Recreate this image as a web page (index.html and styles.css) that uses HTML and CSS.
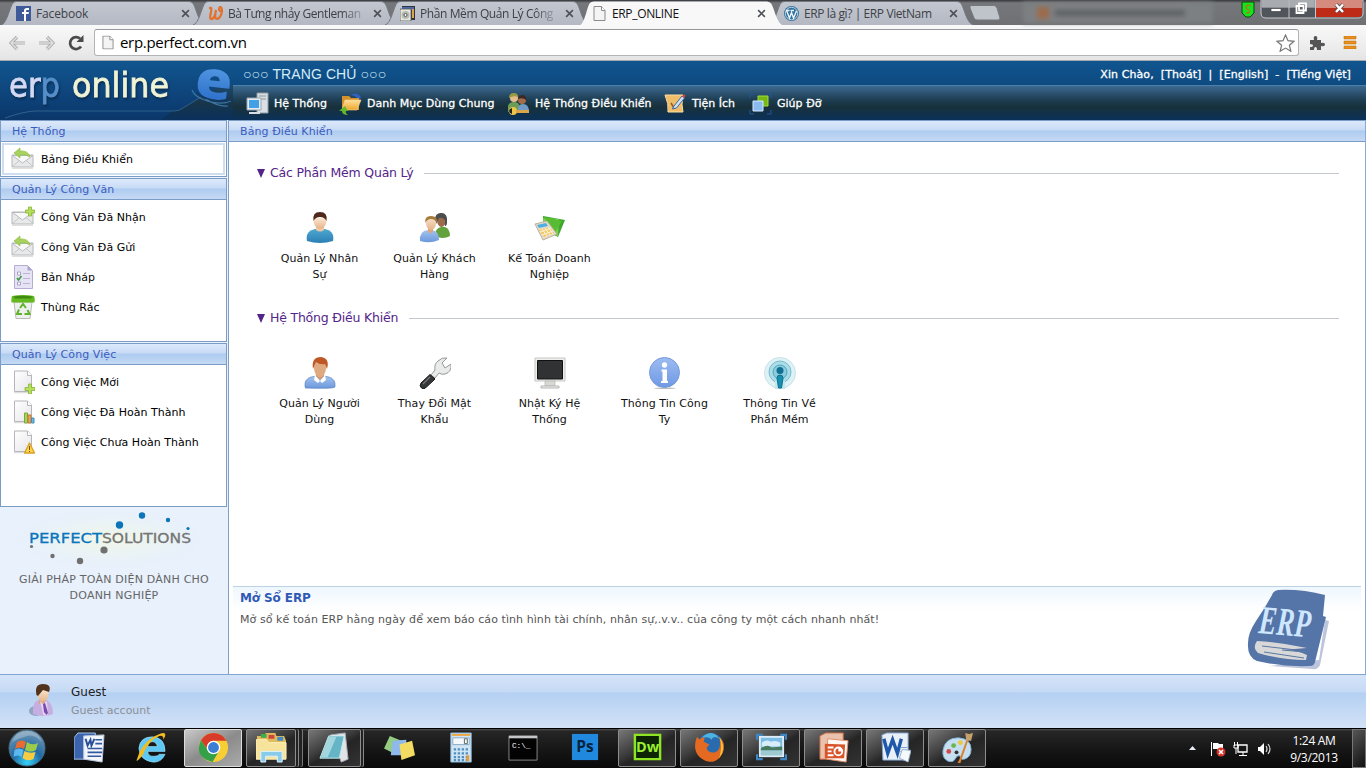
FILE: index.html
```html
<!DOCTYPE html>
<html lang="vi">
<head>
<meta charset="utf-8">
<title>ERP_ONLINE</title>
<link rel="stylesheet" href="styles.css">
</head>
<body>
<svg class="defs" width="0" height="0" aria-hidden="true">
  <defs>
    <linearGradient id="tabG" x2="0" y2="1"><stop offset="0" stop-color="#c3c7d0"/><stop offset="1" stop-color="#b3b8c2"/></linearGradient>
    <linearGradient id="eG" x2="0" y2="1"><stop offset="0" stop-color="#6db4f2"/><stop offset="1" stop-color="#1d5fc0"/></linearGradient>
    <linearGradient id="navG" x2="0" y2="1"><stop offset="0" stop-color="#1b4a70"/><stop offset=".5" stop-color="#18354a"/><stop offset="1" stop-color="#0a315c"/></linearGradient>
    <linearGradient id="blueG" x2="0" y2="1"><stop offset="0" stop-color="#4fa8d0"/><stop offset="1" stop-color="#2b7fb4"/></linearGradient>
    <linearGradient id="shirtG" x2="0" y2="1"><stop offset="0" stop-color="#a4c4f0"/><stop offset="1" stop-color="#6b98dc"/></linearGradient>
    <linearGradient id="faceG" x2="0" y2="1"><stop offset="0" stop-color="#fbe6d0"/><stop offset="1" stop-color="#e4b48a"/></linearGradient>
    <linearGradient id="pageG" x2="1" y2="1"><stop offset="0" stop-color="#fff"/><stop offset="1" stop-color="#e6e6ea"/></linearGradient>
    <linearGradient id="infoG" x2="0" y2="1"><stop offset="0" stop-color="#9dbcf2"/><stop offset="1" stop-color="#6f99e4"/></linearGradient>
    <linearGradient id="folderG" x2="0" y2="1"><stop offset="0" stop-color="#ffe09a"/><stop offset="1" stop-color="#eea62c"/></linearGradient>
    <radialGradient id="orbG" cx=".5" cy=".9" r=".9"><stop offset="0" stop-color="#35d4f8"/><stop offset=".45" stop-color="#1f6aa4"/><stop offset="1" stop-color="#7c9cb4"/></radialGradient>
    <radialGradient id="glowG"><stop offset="0" stop-color="#f4f8e4" stop-opacity=".9"/><stop offset="1" stop-color="#e8f3f0" stop-opacity="0"/></radialGradient>
    <symbol id="envelope" viewBox="0 0 24 24">
      <path d="M1 8h21v12H1z" fill="#e9e9ea" stroke="#b5b7ba"/><path d="M1.500 19.500 9 13M22 19.500 14.500 13" stroke="#c4c6c8" fill="none"/><path d="M1.500 8.500 11.500 16 22 8.500z" fill="#f8f8f8" stroke="#b9bbbe"/><path d="M1 21.500h21" stroke="#ccc" stroke-opacity=".6"/>
    </symbol>
    <symbol id="sheet" viewBox="0 0 24 24">
      <path d="M3.500 1h13l4 4v16.500h-17z" fill="url(#pageG)" stroke="#b5b5ba"/><path d="M16.500 1v4.500h4.500" fill="#fff" stroke="#b5b5ba"/><path d="M3 22.700h17" stroke="#999" stroke-opacity=".4"/>
    </symbol>
    <symbol id="blank" viewBox="0 0 13 15"><path d="M1 .5h7.500L12 4.500v10H1z" fill="#f4f4f4" stroke="#8a8a8a"/><path d="M8.500 .5v4H12" fill="#fff" stroke="#8a8a8a"/></symbol>
    <symbol id="tab" viewBox="0 0 206 25"><path d="M0 25C6 24 9 6 12 3Q13 1.500 16 1.500H188Q191 1.500 192.500 4C196 11 198 24 205 25" fill="url(#tabG)" stroke="#74787f"/></symbol>
  </defs>
</svg>

<div class="tabs">
  <div class="tab"><svg class="tab-bg"><use href="#tab"/></svg>
    <svg class="fav" viewBox="0 0 15 15"><path d="M0 0h15v15H0z" fill="#3f5a99"/><path d="M8 15V8H6V6h2V4.500Q8 2 11 2h2v2h-2q-1 0-1 1v1h3l-.5 2H10v7z" fill="#fff"/></svg>
    <span class="tab-label t1">Facebook</span><svg class="close" viewBox="0 0 8 8"><path d="m1 1 6 6M7 1 1 7"/></svg></div>
  <div class="tab"><svg class="tab-bg"><use href="#tab"/></svg>
    <svg class="fav" viewBox="0 0 15 15"><path d="M2 2q2-1 1 4-2 8 1 7 3-1 4-9-2 9 1 9 4-1 5-8 0-4-2-4-2 2 0 4" fill="none" stroke="#e3702c" stroke-width="2.200" stroke-linecap="round"/></svg>
    <span class="tab-label t2">Bà Tưng nhảy Gentleman</span><svg class="close" viewBox="0 0 8 8"><path d="m1 1 6 6M7 1 1 7"/></svg></div>
  <div class="tab"><svg class="tab-bg"><use href="#tab"/></svg>
    <svg class="fav" viewBox="0 0 15 15"><path d="M2 0h13v14H2z" fill="#31343c"/><path d="M2 1h12v3H2z" fill="#496ca8"/><path d="M12 3h2v9h-2z" fill="#dca34b"/><path d="M0 3h11v12H0z" fill="#e8e8df" stroke="#555" stroke-width=".8"/><circle cx="5.500" cy="9" r="4" fill="#b4bcb4"/><circle cx="5.500" cy="9" r="1.500" fill="#fff" stroke="#555"/></svg>
    <span class="tab-label t3">Phần Mềm Quản Lý Công</span><svg class="close" viewBox="0 0 8 8"><path d="m1 1 6 6M7 1 1 7"/></svg></div>
  <div class="tab active"><svg class="tab-bg" viewBox="0 0 206 26"><path d="M0 26C6 24 8 6 11 3Q12 1.500 15 1.500H188Q191 1.500 192.500 4C196 11 198 24 205 26" fill="#f8f8f9"/></svg>
    <svg class="fav" viewBox="0 0 13 15"><use href="#blank"/></svg>
    <span class="tab-label t4">ERP_ONLINE</span><svg class="close" viewBox="0 0 8 8"><path d="m1 1 6 6M7 1 1 7"/></svg></div>
  <div class="tab"><svg class="tab-bg"><use href="#tab"/></svg>
    <svg class="fav" viewBox="0 0 15 15"><circle cx="7.500" cy="7.500" r="7.500" fill="#2e719d"/><circle cx="7.500" cy="7.500" r="6.200" fill="none" stroke="#d7e2ea" stroke-width=".8"/><path d="M2.500 4.500 5.500 12 7.500 6.500 9.500 12 12.500 5M2 4.500h3.500M6.500 4.500H10" fill="none" stroke="#eef4f8" stroke-width="1.400"/></svg>
    <span class="tab-label t5">ERP là gì? | ERP VietNam</span><svg class="close" viewBox="0 0 8 8"><path d="m1 1 6 6M7 1 1 7"/></svg></div>
  <svg class="newtab" viewBox="0 0 32 16"><path d="M2 .5h23q2 0 3 2.500l3 10q0 2-2 2H8q-2 0-3-2L1 3Q.500 .5 2 .5" fill="#bfc3ca" stroke="#74787f"/></svg>
  <div class="ghost"><i></i><b></b></div>
  <div class="win-area">
    <svg class="shield" viewBox="0 0 14 17"><path d="M1 1h12v11l-4 4H5l-4-4z" fill="#19e11d" stroke="#064b08"/><path d="M10 5q-4-2-5 1 0 2 3 3 2 3-3 3" fill="none" stroke="#a4801a" stroke-width="1.300"/></svg>
    <div class="win">
      <svg viewBox="0 0 104 19"><path d="M1 0h102v13q0 5-5 5H6q-5 0-5-5z" fill="#50545b" stroke="#c5c9cd"/><path d="M1.500 0h54v8h-54z" fill="#8b9097"/><path d="M1.500 0h27v7h-27zM29.500 0h25v7h-25z" fill="#a8acb1"/><path d="M56 0h46v13q0 4-4 4H56z" fill="#be2c18"/><path d="M56 0h46v8H56z" fill="#d48a7c"/><path d="M29 0v18M55.500 0v18" stroke="#c5c9cd"/><path d="M11 8.500h10v3H11z" fill="#fff" stroke="#444" stroke-width=".7"/><path d="M39 3.500h7v7h-7zM36.500 6h7v7h-7z" fill="#5d6167" stroke="#fff" stroke-width="1.800"/><path d="m76 4.500 7 7.500M83 4.500 76 12" stroke="#544" stroke-width="4"/><path d="m76 4.500 7 7.500M83 4.500 76 12" stroke="#fff" stroke-width="2.500"/></svg>
    </div>
  </div>
</div>

<div class="toolbar">
  <svg class="arrows" viewBox="0 0 46 16"><path d="M16 8H2M8 2 2 8l6 6M30 8h14M38 2l6 6-6 6" fill="none" stroke="#aaa" stroke-width="3.200"/><path d="M16 8H2M8 2 2 8l6 6M30 8h14M38 2l6 6-6 6" fill="none" stroke="#dedede" stroke-width="1.500"/></svg>
  <svg class="reload" viewBox="0 0 16 16"><path d="M13 11.500A6 6 0 1 1 12 3.500" fill="none" stroke="#4a4a4a" stroke-width="2.700"/><path d="M15.500 0v7H8.500z" fill="#4a4a4a"/></svg>
  <div class="omnibox"><svg class="page-ico" viewBox="0 0 13 15"><use href="#blank"/></svg><span class="url">erp.perfect.com.vn</span>
    <svg class="star" viewBox="0 0 19 18"><path d="m9.500 1 2.500 5.700 6 .6-4.600 4 1.500 6-5.400-3.200-5.400 3.200 1.500-6L1 7.300l6-.6z" fill="#fff" stroke="#777" stroke-width="1.200"/></svg></div>
  <svg class="puzzle" viewBox="0 0 16 16"><path d="M1 5h4q-1-4 1.500-4T8 5h4v3q4-1 4 1.500T12 11v4H8q0-3-1.500-3T5 15H1v-3q3 0 3-1.500T1 9z" fill="#555"/></svg>
  <svg class="menu" viewBox="0 0 14 13"><path d="M1 0h12v3H1zM1 5h12v3H1zM1 10h12v3H1z" fill="#e98f1c" stroke="#bd6b0b" stroke-width=".5"/></svg>
</div>

<header class="head">
  <div class="brand">
    <svg viewBox="0 0 233 59">
      <path d="M233 24C214 25 206 32 197 38l-16 10q-4 2-8 2l-13 9h73z" fill="url(#navG)"/>
      <path d="M5 57q20-7 31-7h138q5 0 9-3l18-11" fill="none" stroke="#3d719b" opacity=".7"/>
      <text x="9" y="36" class="logo-a" textLength="51" lengthAdjust="spacingAndGlyphs">er<tspan class="logo-p">p</tspan></text>
      <text x="72" y="36" class="logo-b" textLength="97" lengthAdjust="spacingAndGlyphs">online</text>
      <path d="M192 29c3 9 26 17 39 11M206 38q12 8 22 7" fill="none" stroke="#3b75a5" stroke-width="1.200"/>
      <text x="195" y="38" class="logo-e" textLength="37" lengthAdjust="spacingAndGlyphs" transform="rotate(6 213 24)">e</text>
      <path d="M197 32c9 7 22 10 34 7" fill="none" stroke="#123a62" stroke-width="1.500"/>
    </svg>
  </div>
  <div class="head-right">
    <div class="head-top"><span class="home">○○○ TRANG CHỦ ○○○</span><span class="user"><span>Xin Chào,&nbsp; [Thoát]</span><span>|</span><span>[English]</span><span>-</span><span>[Tiếng Việt]</span></span></div>
    <nav class="nav">
      <a class="n1"><svg viewBox="0 0 24 24"><path d="M11 1h11v20H11z" fill="#d9dfe4" stroke="#8f9ba4"/><path d="M13 4h7M13 7h7" stroke="#899"/><path d="M1 6h14v12H1z" fill="#e6ecf2" stroke="#9aa6b0"/><path d="M3 8h10v8H3z" fill="#42a0e6"/><path d="M3 20h11v2H3z" fill="#d7dde2"/></svg><span>Hệ Thống</span></a>
      <a class="n2"><svg viewBox="0 0 24 24"><path d="M11 3q7-4 11 2l-2 3q-4-5-9-5" fill="#2d62c0"/><path d="M3 4h7l2 2h8v12H3z" fill="#d5912a"/><path d="M6 8h16l-4 10H3z" fill="url(#folderG)" stroke="#f6d492" stroke-width=".6"/><path d="m6 14-6 5h3q0 4 6 4-3-2-2-4h2z" fill="#62b92c"/></svg><span>Danh Mục Dùng Chung</span></a>
      <a class="n3"><svg viewBox="0 0 24 24"><path d="M1 20V14q1-4 6-4t6 5v5z" fill="#6b9d56"/><circle cx="7" cy="6" r="4" fill="#e5bd8d"/><path d="M2 6q0-5 5-5 4 0 4 4-4-2-9 1" fill="#9a9a42"/><path d="M11 20v-4q1-4 5-4 6 0 6 8z" fill="#719cc5"/><circle cx="15" cy="8" r="4" fill="#a66d4a"/><path d="M11 7q0-4 5-4 4 1 3 5-3-3-8-1" fill="#3b2a26"/><circle cx="6" cy="19" r="4" fill="#efc64a"/><path d="M5 16v6q-3-1-3-3t3-3" fill="#222"/><path d="M9 18h13v3H9z" fill="#dca64b"/></svg><span>Hệ Thống Điều Khiển</span></a>
      <a class="n4"><svg viewBox="0 0 24 24"><path d="M1 3h18q-2 10 0 17H4Q5 12 1 3" fill="#f0bd68" stroke="#fce0a6"/><path d="m7 11 3 5 7-8" fill="none" stroke="#8f5d25" stroke-width="1.500"/><path d="m10 14 8-10 2.500 2-8 10-4 1z" fill="#d6e0ec" stroke="#336aab"/><path d="m18 4 2-1.500 1.500 1L20 6z" fill="#e3453a"/></svg><span>Tiện Ích</span></a>
      <a class="n5"><svg viewBox="0 0 24 24"><path d="M1 6V2h4M18 2h4v4M1 18v4h4M18 22h4v-4" fill="none" stroke="#235897"/><path d="M9 4h10v10H9z" fill="#77b818" stroke="#a2dc38"/><path d="M4 9h10v10H4z" fill="#89bbf2" stroke="#d8eaff"/></svg><span>Giúp Đỡ</span></a>
    </nav>
  </div>
</header>

<main class="main">
  <aside class="side">
    <section class="panel p1"><h2>Hệ Thống</h2>
      <ul class="sel"><li><svg viewBox="0 0 24 24"><use href="#envelope"/><path d="m3 6 6-5v3q8-1 10 6-4-3-10-2v3z" fill="#a7d25b" stroke="#86b83d" stroke-width=".6"/></svg><span>Bảng Điều Khiển</span></li></ul></section>
    <section class="panel p2"><h2>Quản Lý Công Văn</h2>
      <ul><li><svg viewBox="0 0 24 24"><use href="#envelope" y="-1"/><path d="M17.500 2h3v3h3v3h-3v3h-3V8h-3V5h3z" fill="#b5de5c" stroke="#86b536" stroke-width=".8"/></svg><span>Công Văn Đã Nhận</span></li>
      <li><svg viewBox="0 0 24 24"><use href="#envelope"/><path d="m3 6 6-5v3q8-1 10 6-4-3-10-2v3z" fill="#a7d25b" stroke="#86b83d" stroke-width=".6"/></svg><span>Công Văn Đã Gửi</span></li>
      <li><svg viewBox="0 0 24 24"><path d="M3.500 .5h13l5 5v18h-18z" fill="#e6e3f4" stroke="#b6aed2"/><path d="M16.500 .5v5h5" fill="#aaa3cc"/><path d="M6.500 7h3v3h-3zM6.500 17h3v3h-3z" fill="#fff" stroke="#a9a2c5"/><path d="M12 8.500h7M12 13.500h7M12 18.500h7" stroke="#bcb5d6"/><path d="m6 13 1.500 2 3-4" stroke="#3b9a3e" fill="none" stroke-width="1.600"/></svg><span>Bản Nháp</span></li>
      <li><svg viewBox="0 0 24 24"><path d="M3 7h18l-2 16.500H5z" fill="#eeefef" stroke="#b8bcb8"/><path d="M1 1q11-2 22 0 1 2 .500 6.500H.500Q0 4 1 1" fill="#65b91e"/><path d="M2.500 1.500q9-1.500 19 0L20 3.500H4z" fill="#3f8a12"/><path d="m9 13 3-4 3 4M16.500 15l2 4h-5M11 19H6l2-4.500" fill="none" stroke="#61b329" stroke-width="2"/></svg><span>Thùng Rác</span></li></ul></section>
    <section class="panel p3"><h2>Quản Lý Công Việc</h2>
      <ul><li><svg viewBox="0 0 24 24"><use href="#sheet"/><path d="M17.500 14h3v3.500H24v3h-3.500V24h-3v-3.500H14v-3h3.500z" fill="#b5de5c" stroke="#86b536" stroke-width=".8"/></svg><span>Công Việc Mới</span></li>
      <li><svg viewBox="0 0 24 24"><use href="#sheet"/><path d="M13.500 13h3v10h-3z" fill="#a8d35d" stroke="#78a93a"/><path d="M17 15h3v8h-3z" fill="#eca35d" stroke="#c47730"/><path d="M20.500 18H23v5h-2.500z" fill="#68bde6" stroke="#398fb8"/></svg><span>Công Việc Đã Hoàn Thành</span></li>
      <li><svg viewBox="0 0 24 24"><use href="#sheet"/><path d="m18.500 13 5 10H13.500z" fill="#ffd44a" stroke="#daa22b" stroke-linejoin="round" stroke-width="1.300"/><path d="M18.500 16v4M18.500 21v1" stroke="#73571e"/></svg><span>Công Việc Chưa Hoàn Thành</span></li></ul></section>
    <div class="company">
      <svg viewBox="0 0 227 64"><ellipse cx="110" cy="32" rx="95" ry="29" fill="url(#glowG)"/>
        <g fill="#0b75b8"><circle cx="119.500" cy="18" r="3.700"/><circle cx="142" cy="8.500" r="3.200"/><circle cx="168" cy="13" r="2.200"/><circle cx="188" cy="21.500" r="1.600"/></g>
        <g fill="#707070"><circle cx="104" cy="43" r="3.600"/><circle cx="80" cy="54" r="3.200"/><circle cx="52.500" cy="49" r="2.200"/><circle cx="31.500" cy="39.500" r="1.600"/></g>
        <text x="29" y="36" class="pf" textLength="73" lengthAdjust="spacingAndGlyphs">PERFECT</text><text x="102" y="36" class="sl" textLength="89" lengthAdjust="spacingAndGlyphs">SOLUTIONS</text></svg>
      <p>GIẢI PHÁP TOÀN DIỆN DÀNH CHO<br>DOANH NGHIỆP</p>
    </div>
  </aside>

  <section class="content">
    <h1 class="title">Bảng Điều Khiển</h1>
    <div class="board">
      <section class="group"><h3><i></i><span class="g1">Các Phần Mềm Quản Lý</span></h3>
        <div class="cards">
          <div class="card"><svg viewBox="0 0 32 32"><path d="M3 29q-2-10 8-12h10q10 2 8 12-13 4-26 0" fill="url(#blueG)"/><path d="M12 14h8v4q-4 3-8 0z" fill="#eec6a0"/><path d="M9.500 6h13q0 11-6.500 11T9.500 6" fill="url(#faceG)"/><path d="M9.500 9Q8 0 16 0t6.500 9q-2-4-6.500-4T9.500 9" fill="#50281a"/></svg><span>Quản Lý Nhân<br>Sự</span></div>
          <div class="card"><svg viewBox="0 0 32 32"><path d="M16 24q0-8 6-9h4q5 2 5 9-7 4-15 0" fill="#63a13c"/><ellipse cx="22.500" cy="8" rx="4.500" ry="7" fill="#9b6b4b"/><path d="M16 8q0-7 6-7 7 0 6 9 0 4-2 4V8q-3-3-6-2l-3 6z" fill="#4b4d4e"/><path d="M1 29q-1-10 8-11h4q7 1 7 10-9 4-19 1" fill="url(#shirtG)"/><path d="M9 16h5v4q-2 2-5 0z" fill="#dda77b"/><ellipse cx="12" cy="11" rx="5" ry="7" fill="url(#faceG)"/><path d="M6.500 11Q5 4 12 4t6 7q-2-4-6-4-4 0-5.500 4" fill="#a47b39"/></svg><span>Quản Lý Khách<br>Hàng</span></div>
          <div class="card"><svg viewBox="0 0 32 32"><path d="m9 4 22 4-7 17-15-8z" fill="#3da82c"/><path d="m9 6 16 1-1 17-14-4z" fill="#79cc4e"/><path d="m10 5 18 4-8 13z" fill="#57bc32"/><path d="m1 12 12-3 10 13-14 6z" fill="#e4ddcb" stroke="#bbb19b"/><path d="m3 13 9-2 2 3-9 2z" fill="#4fafe0"/><path d="m5 18 10-3 5 6-10 4z" fill="#f5c95d"/><path d="m8 17 5 7M11 16l5 7M14 15l5 7M6 20l11-4M8 23l11-4" stroke="#f9f4e6"/></svg><span>Kế Toán Doanh<br>Nghiệp</span></div>
        </div></section>
      <section class="group"><h3><i></i><span class="g2">Hệ Thống Điều Khiển</span></h3>
        <div class="cards">
          <div class="card"><svg viewBox="0 0 32 32"><path d="M1 30q-1-8 6-10l6-1h6l6 1q7 2 6 10-1 2-30 1" fill="url(#shirtG)" stroke="#5379b8" stroke-width=".6"/><path d="m11 18 5 6 5-6 1 5-4 3-2-2-2 2-4-3z" fill="#fff"/><path d="M12 15h8v4l-4 4-4-4z" fill="#d59c72"/><ellipse cx="16" cy="11" rx="6" ry="9" fill="#e0aa80"/><path d="M9 12Q7 0 17 0q9 1 6 12l-2-5q-5 1-9-2-1 2-3 7" fill="#bd5725"/></svg><span>Quản Lý Người<br>Dùng</span></div>
          <div class="card"><svg viewBox="0 0 32 32"><path d="m12 18 4-5q-1-6 3-9 4-4 9-3l-5 5 3 5 6-4q1 8-6 10-3 1-6-1l-4 5z" fill="#e9eaea" stroke="#96999b"/><path d="M11 17.500 16 22 7.500 30Q5 33 2.500 31T2 26z" fill="#343738" stroke="#171919"/><path d="m4 27 7-7" stroke="#777" stroke-width="1.200"/></svg><span>Thay Đổi Mật<br>Khẩu</span></div>
          <div class="card"><svg viewBox="0 0 32 32"><path d="M1 1h30v23H1z" fill="#eeeeec" stroke="#c5c5c2"/><path d="M3.500 3.500h25v18.500h-25z" fill="#303234" stroke="#111"/><path d="M11 24h10v5H11z" fill="#d8d8d5" stroke="#b6b6b2" stroke-width=".7"/><path d="M7 29h18v2H7z" fill="#eee" stroke="#b6b6b2"/></svg><span>Nhật Ký Hệ<br>Thống</span></div>
          <div class="card"><svg viewBox="0 0 32 32"><ellipse cx="16" cy="31.200" rx="11" ry=".8" fill="#bbb"/><circle cx="15.500" cy="15.500" r="15" fill="url(#infoG)" stroke="#7699db"/><circle cx="15.500" cy="8" r="2.700" fill="#fff"/><path d="M12.500 12.500h5.500V24h1v2h-7v-2h1.500v-9.500h-1z" fill="#fff"/></svg><span>Thông Tin Công<br>Ty</span></div>
          <div class="card"><svg viewBox="0 0 32 32"><circle cx="16" cy="16" r="15.500" fill="#d7eef3" stroke="#b5dce6" opacity=".8"/><circle cx="16" cy="15" r="11" fill="#acdce8" stroke="#78bdd0"/><circle cx="16" cy="15" r="7" fill="#8bcddc" stroke="#4fa6be"/><path d="M11 24h10v8H11z" fill="#c6e5ec"/><circle cx="16" cy="13.500" r="3.500" fill="#126f93"/><path d="M13 21q0-3 3-3t3 3l-1.500 10h-3z" fill="#168fae" stroke="#08718e"/></svg><span>Thông Tin Về<br>Phần Mềm</span></div>
        </div></section>
    </div>
    <div class="news">
      <div><h4>Mở Sổ ERP</h4><p>Mở sổ kế toán ERP hằng ngày để xem báo cáo tình hình tài chính, nhân sự,.v.v.. của công ty một cách nhanh nhất!</p></div>
      <svg class="book" viewBox="0 0 84 84"><path d="m78 30 4 1-9 44q-2 5-8 4l-43-3 50-6z" fill="#bcc5dc"/><path d="M25 5q1-4 6-5 24-1 47 5l-2 21 3 1-11 45q-1 4-5 4-28 1-53-5Q0 67 1 53q0-10 8-22 9-13 16-26" fill="#5574a7"/><path d="M10 51q23 1 50 7l-25 2q15 0 25 5l-1 5q-24 0-48-7-6-5-1-12" fill="#d8d8d8"/><path d="m15 56 43 5M35 60l23 2M17 62l40 6" stroke="#5c77a2"/><text x="11" y="43" class="erp" textLength="52" lengthAdjust="spacingAndGlyphs" transform="rotate(5 11 43)">ERP</text></svg>
    </div>
  </section>
</main>

<footer class="foot">
  <svg viewBox="0 0 32 34"><ellipse cx="9" cy="27" rx="7" ry="5" fill="#778fb0" opacity=".7"/><path d="M6 30Q5 17 12 16h8q6 4 6 14-9 4-20 0" fill="#c7aee0"/><path d="M12 14h6v6h-6z" fill="#dba47d"/><path d="m13 17 3 3 4-3 1 14q-5 2-5-1z" fill="#e4d3f2"/><path d="m16 20 2-1 3 10-1.500 2-2.500-3z" fill="#7a4bac"/><path d="M10 5h11q2 12-5.500 13-6-2-5.500-13" fill="url(#faceG)"/><path d="M9.500 11Q7 0 16 0t6 8l-6-2-5 6z" fill="#51331e"/></svg>
  <div><b>Guest</b><span>Guest account</span></div>
</footer>

<div class="taskbar">
  <div class="slots">
    <div class="slot"><svg class="orb" viewBox="0 0 38 38"><circle cx="19" cy="19" r="18" fill="url(#orbG)" stroke="#456b82"/><path d="M9 13q5-3 9 0l-2 7q-4-3-9 0z" fill="#e86b32"/><path d="M19 13q5 4 11 1l-2 7q-5 3-11 0z" fill="#9ccb4a"/><path d="M6.500 21q5-3 9 0l-2 7q-4-3-8 0z" fill="#5bb9ef"/><path d="M16.500 22q5 3 11 1l-2 7q-6 3-11-1z" fill="#f8cc42"/><path d="M4 13Q8 2 19 2t15 11q-8-8-15-6T4 13" fill="#fff" opacity=".25"/></svg></div>
    <div class="slot"><svg viewBox="0 0 32 32"><path d="M4 1h18v27H0V6z" fill="#3c63ad" stroke="#aac4ea"/><path d="m10 4 21-1-2 28-19-3z" fill="#f2f5fa" stroke="#b7c4d9"/><path d="M22 8h7M22 12h7M14 17h15M14 21h15M14 25h14" stroke="#3458a0" stroke-width="1.700"/><path d="m12 7 2 7 3-6 1 6 3-7" fill="none" stroke="#284d96" stroke-width="2"/></svg></div>
    <div class="slot"><svg viewBox="0 0 32 32"><path d="M3 17Q4 5 17 5q13 1 13 15H12q1 6 7 5 4 0 5-2h6q-4 9-13 8Q4 29 3 17m9-2h10q-1-5-5-5t-5 5" fill="#5dc8f6" stroke="#a9eaff" stroke-width=".6"/><path d="M7 24Q-1 33 1 28 5 13 18 5q11-6 12-3 1 2-2 6 1-5-4-4Q12 9 7 24" fill="#f2bd22"/></svg></div>
    <div class="slot btn hot"><svg viewBox="0 0 32 32"><circle cx="16" cy="16" r="15" fill="#f7cf34"/><path d="M3 8.500Q8 1 16 1q9 0 13.500 8H16q-6 0-7 8z" fill="#d93b2b"/><path d="M3 8.500q-6 14 5 20l7 2.500 7-12-6 3q-5 0-7-5z" fill="#34a047"/><circle cx="16" cy="16" r="7" fill="#fff"/><circle cx="16" cy="16" r="5.600" fill="#3d7ed5"/></svg></div>
    <div class="slot btn stack two"><svg viewBox="0 0 32 32"><path d="M1 4h7l2-3h10l1 3h8l2 5v19H1z" fill="#dfbb5e"/><path d="M5 2h6v4H5z" fill="#40ac4b"/><path d="M13 3h6v4h-6z" fill="#cf4438"/><path d="M22 5h6v4h-6z" fill="#4189cb"/><path d="M0 8h11l2 3h18v17H0z" fill="#f6e39c" stroke="#fff3bf"/><path d="M5 31V20h22v11h-5v-6H10v6z" fill="#8acbec" stroke="#dff5ff"/></svg></div>
    <div class="slot btn stack"><svg viewBox="0 0 32 32"><path d="m12 3 15-2 3 27-7 3z" fill="#e0e4e4" stroke="#aab"/><path d="M10 4h16l-5 23H1z" fill="#65b5c7" stroke="#c6eaf0"/><path d="M10 5h8L9 26H2z" fill="#bfe4ea" opacity=".7"/></svg></div>
    <div class="slot"><svg viewBox="0 0 32 32"><path d="m6 4 12 5-6 14L0 17z" fill="#94cc82"/><path d="m9 9 14-1v16H7z" fill="#8fb8eb"/><path d="m16 13 13-4 3 15-14 5z" fill="#f4dc62"/></svg></div>
    <div class="slot"><svg viewBox="0 0 32 32"><path d="M5 1h21v30H5z" fill="#cfe4f4" stroke="#85b6da"/><path d="M6 2h19v2H6z" fill="#eda53f"/><path d="M7 6h17v7H7z" fill="#f5f9fc" stroke="#8ba9c0"/><path d="M19 7h3v5h-3z" fill="none" stroke="#566"/><path d="M8 18h15M8 22h15M8 26h15M8 29h15" stroke="#528fbd" stroke-width="2.400" stroke-dasharray="2.400 1.700"/><path d="M21 24h3v6h-3z" fill="#e99a3c"/></svg></div>
    <div class="slot"><svg viewBox="0 0 32 32"><path d="M1 4h29v25H1z" fill="#030303" stroke="#888"/><path d="M1 4h29v2.500H1z" fill="#c4c7c9"/><text x="4" y="16" class="cmd">C:\_</text></svg></div>
    <div class="slot"><svg viewBox="0 0 32 32"><path d="M2 2h27v27H2z" fill="#2089de"/><text x="15.500" y="21" class="ps">Ps</text></svg></div>
    <div class="slot btn"><svg viewBox="0 0 32 32"><path d="M3 3h26v25H3z" fill="#0d2405" stroke="#8ee622" stroke-width="2.500"/><text x="16" y="21" class="dw">Dw</text></svg></div>
    <div class="slot btn"><svg viewBox="0 0 32 32"><circle cx="17" cy="15" r="14" fill="#286bae"/><path d="M8 6q4-5 10-5 6 1 8 6-6-4-8 1-2-4-10-2" fill="#4fb3e1"/><path d="M3 5q-5 14 3 21 11 9 20 1 7-8 4-17l-4-5q3 13-4 16-8 1-9-5l3-3-6-3 1-4Q7 5 6 8z" fill="#e46a22"/><path d="M26 5q6 8 3 17l-3 5q4-12 0-22" fill="#f7c532"/></svg></div>
    <div class="slot btn"><svg viewBox="0 0 32 32"><path d="M3 4h26v22H3z" fill="#dcebf4"/><path d="M5 6h22v18H5z" fill="#7abce6"/><path d="M6 11q5-4 9-1 6-2 10 1v4H6z" fill="#d8edf8"/><path d="M5 17q7-5 11-1l11-1v4H5z" fill="#487b5c"/><path d="M5 19h22v5H5z" fill="#9fc9d1"/><path d="M1 8V3h6M25 3h6v5M1 23v5h6M25 28h6v-5" fill="none" stroke="#3e86c5" stroke-width="2.500"/></svg></div>
    <div class="slot btn"><svg viewBox="0 0 32 32"><path d="M2 4l6-3h18v27H2z" fill="#e9c2ae" stroke="#d26b43"/><path d="m10 7 21 2-2 22-20-3z" fill="#fff7f1" stroke="#df8d6b"/><path d="m7 12 21 1-1 14H7z" fill="#d9542b"/><path d="M10 16h6M10 20h4M10 24h6" stroke="#fff" stroke-width="2"/><circle cx="21" cy="20" r="4" fill="none" stroke="#fff" stroke-width="2"/><path d="M21 20v-4q4 0 4 4z" fill="#fff"/></svg></div>
    <div class="slot btn"><svg viewBox="0 0 32 32"><path d="M2 3 7 1h22v28H3z" fill="#e9f0f8" stroke="#7fa4d5"/><path d="m4 7 4 15 5-14 5 14 4-15" fill="none" stroke="#1f58a8" stroke-width="3.500"/><path d="M21 20h8M21 16h7" stroke="#75a0d6"/><path d="m23 18 9 1-3 12-9-4z" fill="#f6f9fc" stroke="#93acc9"/></svg></div>
    <div class="slot btn"><svg viewBox="0 0 32 32"><path d="M1 19Q3 6 17 6q13 1 13 12 0 8-7 10-4 1-4-3-3-2-5 2-2 5-8 3-6-3-5-11" fill="#c5dff1" stroke="#7fb0d2"/><circle cx="7" cy="20" r="2.500" fill="#d24b49"/><circle cx="12" cy="14" r="2.500" fill="#70b451"/><circle cx="19" cy="11" r="2.500" fill="#eec83c"/><circle cx="15" cy="21" r="2" fill="#333"/><path d="m28 6-9 26-3 0 2-4 8-22z" fill="#d98232"/><path d="m24 1 4 1 4-1-2 8h-5z" fill="#c5a16c"/></svg></div>
  </div>
  <div class="tray">
    <svg viewBox="0 0 88 20"><path d="m4 11 3.500-4 3.500 4z" fill="#e9edf5"/><path d="M26.500 3v14" stroke="#fff"/><path d="M28 4h5l1 1h4v6h-5l-1-1h-4z" fill="#fff"/><circle cx="36" cy="13" r="4.500" fill="#d33329"/><path d="m34 11 4 4M38 11l-4 4" stroke="#fff" stroke-width="1.500"/><path d="M53 6h9v7h-9z" fill="none" stroke="#fff" stroke-width="1.300"/><path d="M49.500 3v4M52.500 3v4M49 6h4v3h-4zM51 9v6M58 13v3M54 16.500h8" fill="none" stroke="#fff"/><path d="M73 8h2l4-4v12l-4-4h-2z" fill="#fff"/><path d="M81 7q2 3 0 6M83 5q4 5 0 10" fill="none" stroke="#ddd" stroke-width="1.200"/></svg>
    <div class="clock">1:24 AM<br>9/3/2013</div>
    <div class="peek"></div>
  </div>
</div>
</body>
</html>
```
FILE: styles.css
```css
* { box-sizing: border-box; }
body { margin: 0; width: 1366px; height: 768px; overflow: hidden; display: flex; flex-direction: column; font: 11px/16px "DejaVu Sans", sans-serif; background: #fff; color: #111; }
h1, h2, h3, h4, p, ul { margin: 0; padding: 0; font-weight: normal; }
svg { flex: none; display: block; }
.defs { position: absolute; }

/* browser tabs */
.tabs { height: 25px; flex: none; display: flex; position: relative; background: linear-gradient(#35363a 0, #75777a 3px, #6e7073 100%); font: 12px/17px "Open Sans", "Noto Sans", sans-serif; color: #3e4147; padding-left: 3px; }
.tab { position: relative; width: 192px; flex: none; display: flex; align-items: center; padding: 1px 5px 0 13px; }
.tab-bg { position: absolute; left: -2px; top: 0; width: 206px; height: 25px; }
.tab.active { z-index: 2; color: #111; }
.tab.active .tab-bg { left: 0; height: 26px; }
.tab .fav { position: relative; width: 15px; height: 15px; margin-right: 5px; }
.tab-label { position: relative; white-space: nowrap; width: 142px; letter-spacing: -.15px; overflow: hidden; }
.t2, .t3 { width: 137px; margin-right: 5px; letter-spacing: -.4px; -webkit-mask-image: linear-gradient(90deg, #000 85%, rgba(0,0,0,.25) 100%); mask-image: linear-gradient(90deg, #000 85%, rgba(0,0,0,.25) 100%); }
.t4 { letter-spacing: -.35px; }
.t5 { letter-spacing: -.4px; }
.close { position: relative; width: 9px; height: 9px; margin-left: 6px; }
.close path { stroke: #4c4f55; stroke-width: 1.4; }
.newtab { width: 32px; height: 16px; margin: 5px 0 0 6px; }
.ghost { margin: 2px 0 0 22px; width: 190px; height: 21px; background: #7d8082; filter: blur(2.5px); display: flex; align-items: center; padding-left: 14px; }
.ghost i { width: 12px; height: 12px; background: #9d6a4c; margin-right: 6px; }
.ghost b { width: 130px; height: 6px; background: #5e6063; }
.win-area { display: flex; margin-left: auto; }
.shield { width: 14px; height: 17px; margin: 1px 5px 0 0; }
.win svg { width: 104px; height: 19px; margin-right: 2px; }

/* address row */
.toolbar { height: 36px; flex: none; display: flex; align-items: center; background: linear-gradient(#f9f9fa, #e5e5e6); border-bottom: 1px solid #a6a9ad; padding-left: 9px; }
.arrows { width: 46px; height: 16px; }
.reload { width: 16px; height: 16px; margin-left: 13px; }
.omnibox { margin-left: 10px; width: 1205px; height: 27px; display: flex; align-items: center; background: #fff; border: 1px solid #b4b4b6; border-top-color: #96989c; border-radius: 3px; }
.page-ico { width: 12px; height: 15px; margin: 0 6px 0 7px; }
.url { font: 15px/20px "Open Sans", sans-serif; color: #000; letter-spacing: -.3px; padding-bottom: 2px; }
.star { width: 19px; height: 18px; margin-left: auto; margin-right: 3px; }
.puzzle { width: 16px; height: 16px; margin-left: 10px; }
.menu { width: 14px; height: 13px; margin-left: 18px; }

/* application header */
.head { height: 59px; flex: none; display: flex; background: linear-gradient(#11558f, #0b376a); }
.brand { width: 233px; flex: none; }
.brand svg { width: 233px; height: 59px; overflow: visible; }
.logo-a, .logo-b { font: 33px "DejaVu Sans", sans-serif; fill: #d5d9f3; stroke: #d5d9f3; stroke-width: .8; filter: drop-shadow(1px 2px 1px rgba(3, 30, 58, .6)); }
.logo-p { fill: #568fc9; stroke: #568fc9; }
.logo-b { fill: #f0f3d4; stroke: #f0f3d4; }
.logo-e { font: 800 53px "Open Sans", sans-serif; fill: url(#eG); }
.head-right { flex: 1; display: flex; flex-direction: column; }
.head-top { height: 24px; display: flex; justify-content: space-between; padding: 3px 15px 0 10px; background: linear-gradient(#11558f, #0d4a80); }
.home { font: 14px/20px "Liberation Sans", sans-serif; color: #d4ecfa; letter-spacing: .1px; }
.user { display: flex; gap: 7px; font: 11px/22px "DejaVu Sans", sans-serif; color: #fff; -webkit-text-stroke: .3px #fff; letter-spacing: .08px; }
.nav { flex: 1; display: flex; border-top: 1px solid #4c80aa; background: linear-gradient(#3d6990 0, #1d3d52 40%, #18313b 60%, #0a315c 100%); padding-left: 13px; font: 11px/34px "DejaVu Sans", sans-serif; color: #fff; -webkit-text-stroke: .3px #fff; letter-spacing: .02px; }
.nav a { display: flex; align-items: center; white-space: nowrap; }
.nav span { padding-top: 1px; }
.nav svg { width: 24px; height: 24px; margin-right: 4px; }
.n1 { width: 93px; } .n2 { width: 168px; } .n3 { width: 157px; } .n4 { width: 85px; }

/* body columns */
.main { height: 554px; flex: none; display: flex; }
.side { width: 229px; flex: none; background: #e8f1fc; border-right: 1px solid #7f9fc9; display: flex; flex-direction: column; }
.panel { width: 227px; border: 1px solid #7c9cc8; background: #fff; flex: none; }
.panel h2, .title { height: 21px; background: linear-gradient(#dce9fb 0, #c8dbf5 45%, #aeccf0 50%, #c5d9f4 100%); border-bottom: 1px solid #7c9cc8; color: #3c5cbd; font: 11px/20px "DejaVu Sans", sans-serif; padding: 1px 0 0 11px; letter-spacing: .08px; }
.p1 { height: 57px; margin-bottom: 1px; }
.p2 { height: 164px; margin-bottom: 1px; }
.p3 { height: 164px; }
.panel ul { list-style: none; padding: 2px 0 0 10px; }
.panel .sel { height: 32px; margin: 1px; padding: 0 0 0 7px; border: 2px solid #cfdeee; }
.panel li { height: 30px; display: flex; align-items: center; color: #000; letter-spacing: .03px; }
.panel li span { padding-top: 2px; }
.panel .sel li { height: 28px; }
.panel li svg { width: 24px; height: 24px; margin-right: 6px; }
.company { flex: 1; color: #666; }
.company svg { width: 227px; height: 64px; }
.company p { text-align: center; letter-spacing: .22px; width: 228px; padding-top: 1px; }
.pf, .sl { font: 14.500px "DejaVu Sans", sans-serif; fill: #0875bd; stroke: #0875bd; stroke-width: .3; }
.sl { fill: #757575; stroke: #757575; }
.content { flex: 1; display: flex; flex-direction: column; border-right: 1px solid #8aa9cf; }
.title { height: 22px; border-top: 1px solid #7c9cc8; flex: none; }
.board { padding: 21px 26px 0 28px; height: 444px; flex: none; }
.group { height: 145px; }
.group h3 { display: flex; align-items: center; height: 20px; font-size: 12.500px; color: #542489; letter-spacing: -.2px; }
.group h3 i { border: 4px solid transparent; border-top: 9px solid #542489; border-bottom: 0; margin: 0 5px 0 0; }
.group h3::after { content: ""; flex: 1; height: 1px; margin-left: 11px; background: #c3c7cf; }
.cards { display: flex; padding: 29px 0 0 5px; }
.card { width: 115px; display: flex; flex-direction: column; align-items: center; text-align: center; letter-spacing: .05px; }
.card svg { width: 32px; height: 32px; margin-bottom: 7px; }
.news { flex: 1; margin: 0 4px 0 4px; padding: 3px 0 0 7px; border-top: 1px solid #bdd3e5; background: linear-gradient(#eef7fe, #fff 24px); display: flex; justify-content: space-between; }
.news h4 { font-weight: bold; font-size: 12px; color: #3059b5; letter-spacing: -.1px; }
.news p { margin-top: 6px; color: #555; letter-spacing: .07px; }
.book { width: 84px; height: 84px; margin-right: 30px; overflow: visible; }
.erp { font: italic bold 40px "Liberation Serif", serif; fill: #cfe6ff; }

/* guest strip */
.foot { height: 54px; flex: none; display: flex; align-items: center; padding: 0 0 1px 27px; border-top: 1px solid #7fa5d2; background: linear-gradient(#d5e4f8 0, #c5daf5 32%, #b4d0f2 34%, #d3e2f7 100%); }
.foot svg { width: 32px; height: 34px; margin-right: 12px; }
.foot b, .foot span { display: block; line-height: 18px; }
.foot b { font-weight: normal; font-size: 12px; color: #222; }
.foot span { color: #8b8f97; padding-top: 1px; }

/* desktop taskbar */
.taskbar { height: 40px; flex: none; display: flex; justify-content: space-between; background: linear-gradient(#555 0, #262626 2px, #171717 50%, #090909 100%); border-top: 1px solid #000; }
.slots { display: flex; margin-left: -4px; }
.slot { width: 62px; height: 38px; padding: 0 2px 1px; display: flex; justify-content: center; align-items: center; }
.slot svg { width: 31px; height: 31px; }
.slot .orb { width: 38px; height: 38px; }
.btn { height: 38px; width: 58px; margin: 0 2px; border: 1px solid #8d8d8d; border-radius: 2px; background: linear-gradient(150deg, #777 0, #3b3b3b 42%, #252525 55%, #333 100%); }
.hot { background: linear-gradient(150deg, #c9c9c9, #8b8b8b 50%, #aaa); border-color: #ddd; }
.stack { width: 53px; margin-right: 7px; box-shadow: 2px 0 #222, 3px 0 #888; }
.two { width: 50px; margin-right: 10px; box-shadow: 2px 0 #222, 3px 0 #888, 6px 0 #222, 7px 0 #777; }
.cmd { font: 8px "Liberation Mono", monospace; fill: #fff; }
.ps, .dw { font: bold 16px "Open Sans", sans-serif; text-anchor: middle; fill: #05243f; }
.dw { fill: #9af02c; font-size: 15px; }
.tray { display: flex; align-items: center; }
.tray svg { width: 88px; height: 20px; }
.clock { width: 76px; text-align: center; font: 12px/17px "Open Sans", sans-serif; color: #fff; letter-spacing: -.3px; padding-left: 6px; }
.peek { width: 14px; height: 39px; margin-left: 3px; border: 1px solid #777; background: linear-gradient(135deg, #555, #111); }
```
